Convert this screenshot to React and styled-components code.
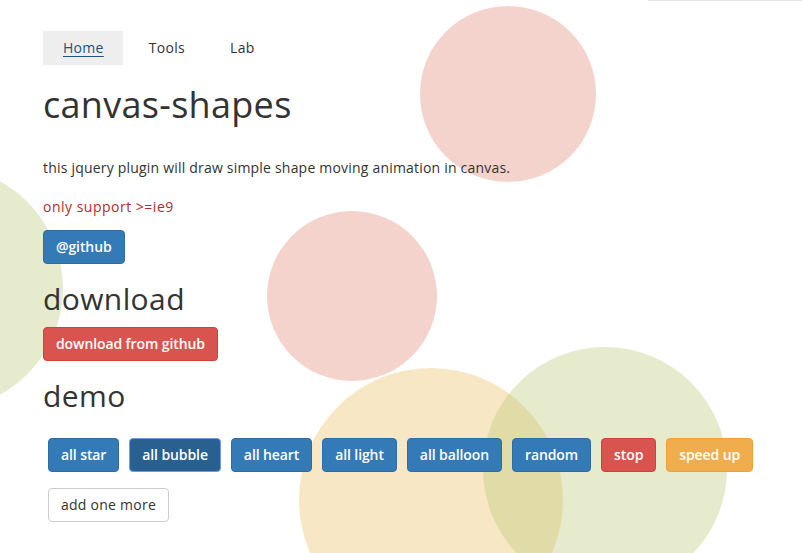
import React from "react";
import styled, { createGlobalStyle } from "styled-components";

const Global = createGlobalStyle`
  html, body { margin: 0; padding: 0; background: #fff; }
  body {
    font-family: "Open Sans", "Noto Sans", "Liberation Sans", sans-serif;
    font-size: 14px;
    line-height: 20px;
    color: #333;
    overflow: hidden;
  }
  * { box-sizing: border-box; }
`;

const Page = styled.div`
  position: relative;
  width: 802px;
  height: 553px;
  overflow: hidden;
`;

const Canvas = styled.svg`
  position: absolute;
  left: 0;
  top: 0;
  z-index: 0;
`;

const TopLine = styled.div`
  position: absolute;
  top: 0;
  left: 648px;
  right: 0;
  height: 1px;
  background: #e2e2e2;
`;

const Container = styled.div`
  position: relative;
  z-index: 1;
  padding: 31px 0 0 43px;
  display: flex;
  flex-direction: column;
  align-items: flex-start;
`;

const Nav = styled.nav`
  display: flex;
  gap: 6px;
`;

const NavLink = styled.a`
  display: block;
  height: 34px;
  line-height: 34px;
  padding: 0 19px 0 20px;
  font-size: 14px;
  letter-spacing: 0.3px;
  color: ${(p) => (p.$active ? "#23527c" : "#333")};
  background: ${(p) => (p.$active ? "#eeeeee" : "transparent")};
  text-decoration: ${(p) => (p.$active ? "underline" : "none")};
  text-underline-offset: 3px;
`;

const Title = styled.h1`
  margin: ${(p) => p.$mt}px 0 0 0;
  font-weight: 400;
  font-size: ${(p) => p.$size}px;
  line-height: ${(p) => p.$lh}px;
  color: #333;
  letter-spacing: ${(p) => p.$ls || 0}px;
`;

const Text = styled.p`
  margin: ${(p) => p.$mt}px 0 0 0;
  font-size: 14px;
  line-height: 20px;
  color: ${(p) => p.$color || "#333"};
  letter-spacing: ${(p) => p.$ls ?? 0.2}px;
`;

const colors = {
  primary: { bg: "#337ab7", border: "#2e6da4", color: "#fff" },
  active: { bg: "#286090", border: "#6f9fd8", color: "#fff" },
  danger: { bg: "#d9534f", border: "#d43f3a", color: "#fff" },
  warning: { bg: "#f0ad4e", border: "#eea236", color: "#fff" },
  default: { bg: "#fff", border: "#cccccc", color: "#333" },
};

const Btn = styled.button`
  height: 34px;
  padding: 0 12px;
  margin-top: ${(p) => p.$mt || 0}px;
  font-family: inherit;
  font-size: 14px;
  font-weight: ${(p) => (p.$variant === "default" ? 400 : 600)};
  letter-spacing: ${(p) => (p.$variant === "default" ? 0.25 : -0.1)}px;
  line-height: 32px;
  border-radius: 4px;
  border: 1px solid ${(p) => colors[p.$variant].border};
  background: ${(p) => colors[p.$variant].bg};
  color: ${(p) => colors[p.$variant].color};
  cursor: pointer;
  white-space: nowrap;
`;

const Row = styled.div`
  display: flex;
  flex-wrap: wrap;
  gap: 16px 10px;
  margin-top: ${(p) => p.$mt}px;
  padding-left: 5px;
  width: 740px;
`;

const circles = [
  { cx: -59, cy: 288, r: 122, fill: "rgba(184,198,112,0.35)" },
  { cx: 508, cy: 94, r: 88, fill: "rgba(226,129,112,0.35)" },
  { cx: 352, cy: 296, r: 85, fill: "rgba(226,129,112,0.35)" },
  { cx: 431, cy: 500, r: 132, fill: "rgba(232,186,89,0.35)" },
  { cx: 605, cy: 469, r: 122, fill: "rgba(184,198,112,0.35)" },
];

const demo = [
  ["all star", "primary"],
  ["all bubble", "active"],
  ["all heart", "primary"],
  ["all light", "primary"],
  ["all balloon", "primary"],
  ["random", "primary"],
  ["stop", "danger"],
  ["speed up", "warning"],
  ["add one more", "default"],
];

export default function App() {
  return (
    <Page>
      <Global />
      <Canvas width="802" height="553" viewBox="0 0 802 553">
        {circles.map((c, i) => (
          <circle key={i} cx={c.cx} cy={c.cy} r={c.r} fill={c.fill} />
        ))}
      </Canvas>
      <TopLine />
      <Container>
        <Nav>
          <NavLink $active href="#">Home</NavLink>
          <NavLink href="#">Tools</NavLink>
          <NavLink href="#">Lab</NavLink>
        </Nav>
        <Title $mt={20} $size={36} $lh={40} $ls={0.3}>canvas-shapes</Title>
        <Text $mt={33}>this jquery plugin will draw simple shape moving animation in canvas.</Text>
        <Text $mt={19} $ls={0.5} $color="#b52b2b">only support &gt;=ie9</Text>
        <Btn $variant="primary" $mt={13}>@github</Btn>
        <Title as="h2" $mt={18} $size={30} $lh={33} $ls={0.4}>download</Title>
        <Btn $variant="danger" $mt={12}>download from github</Btn>
        <Title as="h2" $mt={18} $size={30} $lh={33} $ls={0.4}>demo</Title>
        <Row $mt={26}>
          {demo.map(([label, v]) => (
            <Btn key={label} $variant={v}>{label}</Btn>
          ))}
        </Row>
      </Container>
    </Page>
  );
}
